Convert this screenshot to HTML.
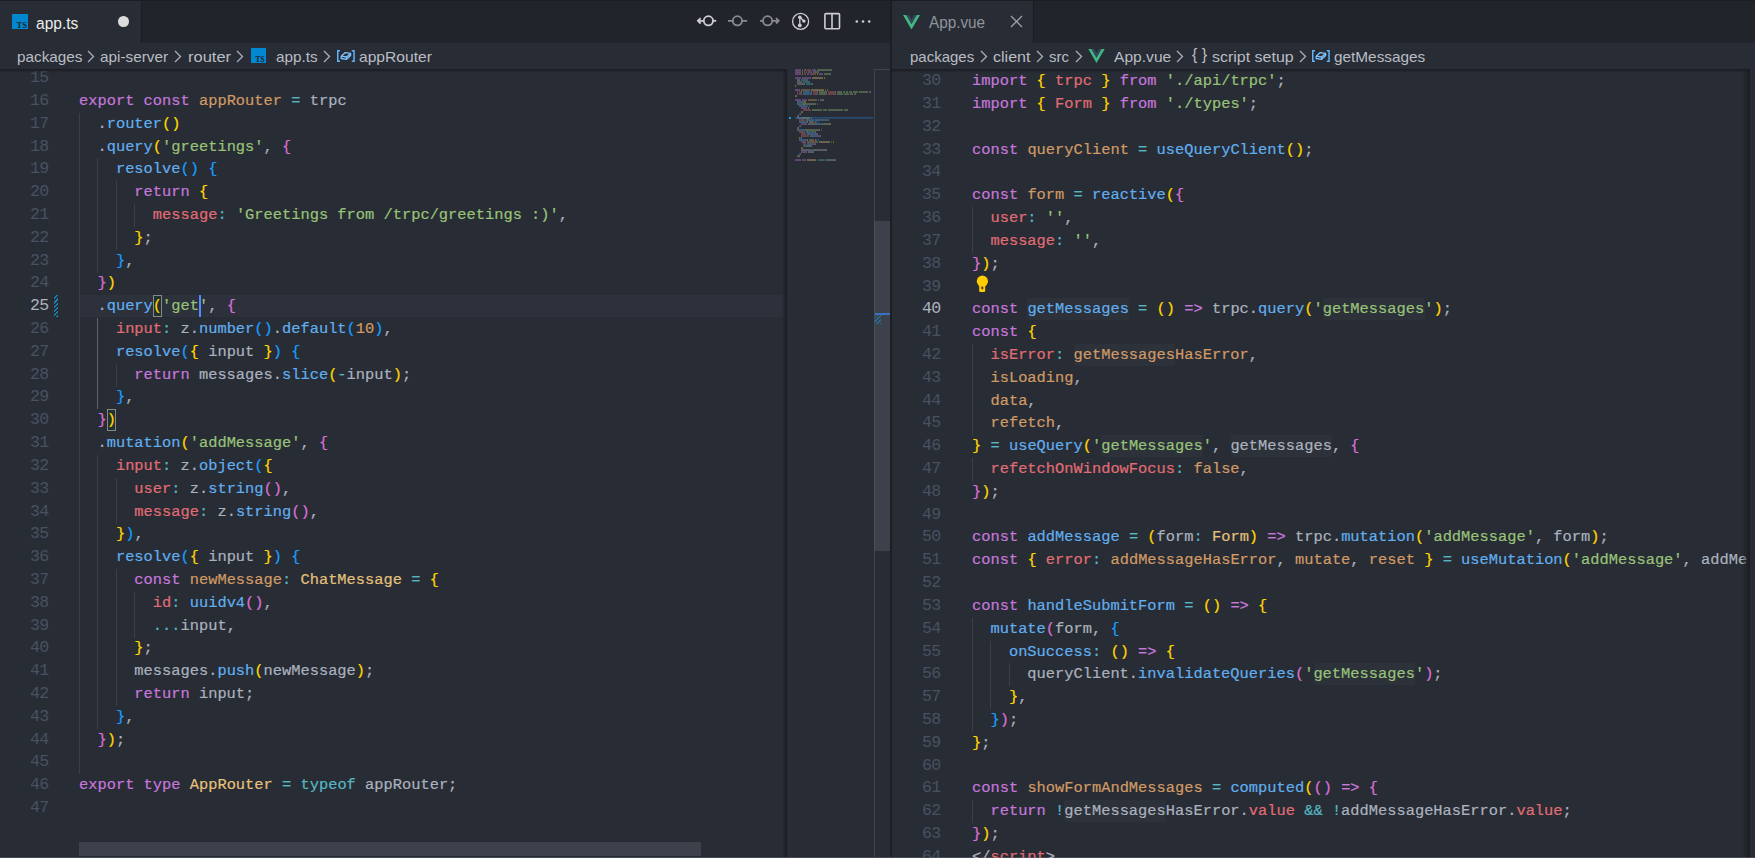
<!DOCTYPE html><html><head><meta charset="utf-8"><style>
*{margin:0;padding:0;box-sizing:border-box}
html,body{width:1755px;height:858px;overflow:hidden;background:#21252b;position:relative}
.a{position:absolute}
.code{font-family:"Liberation Mono",monospace;font-size:15.39px;line-height:22.8px;white-space:pre;color:#abb2bf;height:22.8px}
.code b{font-weight:normal}
.code{-webkit-text-stroke:0.2px currentColor}
.k{color:#c678dd}.f{color:#61afef}.s{color:#98c379}.v{color:#e06c75}.c{color:#d19a66}.t{color:#e5c07b}.o{color:#56b6c2}.y{color:#ffd700}.p{color:#da70d6}.b{color:#179fff}
.ln{font-family:"Liberation Mono",monospace;font-size:16.6px;letter-spacing:-0.77px;line-height:22.8px;color:#495162;text-align:right;width:40px;height:22.8px}
.ui{font-family:"Liberation Sans",sans-serif;white-space:pre}
.g{width:1px;background:#3b4048}
</style></head><body><div class="a" style="left:0;top:0;width:1755px;height:1px;background:#1b1d23"></div><div class="a" style="left:0;top:1px;width:141px;height:42px;background:#282c34"></div><div class="a" style="left:141px;top:1px;width:1px;height:42px;background:#1a1c20"></div><div class="a" style="left:0;top:43px;width:890px;height:814px;background:#282c34"></div><div class="a" style="left:890px;top:0;width:2px;height:858px;background:#1c1e23"></div><div class="a" style="left:892px;top:1px;width:141px;height:42px;background:#282c34"></div><div class="a" style="left:1033px;top:1px;width:1px;height:42px;background:#1a1c20"></div><div class="a" style="left:892px;top:43px;width:863px;height:814px;background:#282c34"></div><div class="a" style="left:0;top:857px;width:1755px;height:1px;background:#45494f"></div><div class="a" style="left:80px;top:295px;width:707px;height:22px;background:#2c313c"></div><div class="a" style="left:152.88px;top:295px;width:9.5px;height:22px;border:1px solid #888888;background:#22322e"></div><div class="a" style="left:106.70px;top:409px;width:9.5px;height:22px;border:1px solid #888888;background:#22322e"></div><div class="a g" style="left:79.00px;top:113.00px;height:23px"></div><div class="a g" style="left:79.00px;top:136.00px;height:23px"></div><div class="a g" style="left:79.00px;top:158.00px;height:23px"></div><div class="a g" style="left:97.47px;top:158.00px;height:23px"></div><div class="a g" style="left:79.00px;top:181.00px;height:23px"></div><div class="a g" style="left:97.47px;top:181.00px;height:23px"></div><div class="a g" style="left:115.94px;top:181.00px;height:23px"></div><div class="a g" style="left:79.00px;top:204.00px;height:23px"></div><div class="a g" style="left:97.47px;top:204.00px;height:23px"></div><div class="a g" style="left:115.94px;top:204.00px;height:23px"></div><div class="a g" style="left:134.41px;top:204.00px;height:23px"></div><div class="a g" style="left:79.00px;top:227.00px;height:23px"></div><div class="a g" style="left:97.47px;top:227.00px;height:23px"></div><div class="a g" style="left:115.94px;top:227.00px;height:23px"></div><div class="a g" style="left:79.00px;top:250.00px;height:23px"></div><div class="a g" style="left:97.47px;top:250.00px;height:23px"></div><div class="a g" style="left:79.00px;top:272.00px;height:23px"></div><div class="a g" style="left:79.00px;top:295.00px;height:23px"></div><div class="a g" style="left:79.00px;top:318.00px;height:23px"></div><div class="a g" style="left:97.47px;top:318.00px;height:23px ;background:#5f6269"></div><div class="a g" style="left:79.00px;top:341.00px;height:23px"></div><div class="a g" style="left:97.47px;top:341.00px;height:23px ;background:#5f6269"></div><div class="a g" style="left:79.00px;top:364.00px;height:23px"></div><div class="a g" style="left:97.47px;top:364.00px;height:23px ;background:#5f6269"></div><div class="a g" style="left:115.94px;top:364.00px;height:23px"></div><div class="a g" style="left:79.00px;top:386.00px;height:23px"></div><div class="a g" style="left:97.47px;top:386.00px;height:23px ;background:#5f6269"></div><div class="a g" style="left:79.00px;top:409.00px;height:23px"></div><div class="a g" style="left:79.00px;top:432.00px;height:23px"></div><div class="a g" style="left:79.00px;top:455.00px;height:23px"></div><div class="a g" style="left:97.47px;top:455.00px;height:23px"></div><div class="a g" style="left:79.00px;top:478.00px;height:23px"></div><div class="a g" style="left:97.47px;top:478.00px;height:23px"></div><div class="a g" style="left:115.94px;top:478.00px;height:23px"></div><div class="a g" style="left:79.00px;top:501.00px;height:23px"></div><div class="a g" style="left:97.47px;top:501.00px;height:23px"></div><div class="a g" style="left:115.94px;top:501.00px;height:23px"></div><div class="a g" style="left:79.00px;top:523.00px;height:23px"></div><div class="a g" style="left:97.47px;top:523.00px;height:23px"></div><div class="a g" style="left:79.00px;top:546.00px;height:23px"></div><div class="a g" style="left:97.47px;top:546.00px;height:23px"></div><div class="a g" style="left:79.00px;top:569.00px;height:23px"></div><div class="a g" style="left:97.47px;top:569.00px;height:23px"></div><div class="a g" style="left:115.94px;top:569.00px;height:23px"></div><div class="a g" style="left:79.00px;top:592.00px;height:23px"></div><div class="a g" style="left:97.47px;top:592.00px;height:23px"></div><div class="a g" style="left:115.94px;top:592.00px;height:23px"></div><div class="a g" style="left:134.41px;top:592.00px;height:23px"></div><div class="a g" style="left:79.00px;top:615.00px;height:23px"></div><div class="a g" style="left:97.47px;top:615.00px;height:23px"></div><div class="a g" style="left:115.94px;top:615.00px;height:23px"></div><div class="a g" style="left:134.41px;top:615.00px;height:23px"></div><div class="a g" style="left:79.00px;top:637.00px;height:23px"></div><div class="a g" style="left:97.47px;top:637.00px;height:23px"></div><div class="a g" style="left:115.94px;top:637.00px;height:23px"></div><div class="a g" style="left:79.00px;top:660.00px;height:23px"></div><div class="a g" style="left:97.47px;top:660.00px;height:23px"></div><div class="a g" style="left:115.94px;top:660.00px;height:23px"></div><div class="a g" style="left:79.00px;top:683.00px;height:23px"></div><div class="a g" style="left:97.47px;top:683.00px;height:23px"></div><div class="a g" style="left:115.94px;top:683.00px;height:23px"></div><div class="a g" style="left:79.00px;top:706.00px;height:23px"></div><div class="a g" style="left:97.47px;top:706.00px;height:23px"></div><div class="a g" style="left:79.00px;top:729.00px;height:23px"></div><div class="a g" style="left:79.00px;top:751.00px;height:23px"></div><div class="a ln" style="left:8.5px;top:67.00px;color:#495162">15</div><div class="a ln" style="left:8.5px;top:90.00px;color:#495162">16</div><div class="a code" style="left:79px;top:90.00px"><b class="k">export</b> <b class="k">const</b> <b class="c">appRouter</b> <b class="o">=</b> trpc</div><div class="a ln" style="left:8.5px;top:113.00px;color:#495162">17</div><div class="a code" style="left:79px;top:113.00px">  .<b class="f">router</b><b class="y">()</b></div><div class="a ln" style="left:8.5px;top:136.00px;color:#495162">18</div><div class="a code" style="left:79px;top:136.00px">  .<b class="f">query</b><b class="y">(</b><b class="s">&#x27;greetings&#x27;</b>, <b class="p">{</b></div><div class="a ln" style="left:8.5px;top:158.00px;color:#495162">19</div><div class="a code" style="left:79px;top:158.00px">    <b class="f">resolve</b><b class="b">()</b> <b class="b">{</b></div><div class="a ln" style="left:8.5px;top:181.00px;color:#495162">20</div><div class="a code" style="left:79px;top:181.00px">      <b class="k">return</b> <b class="y">{</b></div><div class="a ln" style="left:8.5px;top:204.00px;color:#495162">21</div><div class="a code" style="left:79px;top:204.00px">        <b class="v">message</b><b class="o">:</b> <b class="s">&#x27;Greetings from /trpc/greetings :)&#x27;</b>,</div><div class="a ln" style="left:8.5px;top:227.00px;color:#495162">22</div><div class="a code" style="left:79px;top:227.00px">      <b class="y">}</b>;</div><div class="a ln" style="left:8.5px;top:250.00px;color:#495162">23</div><div class="a code" style="left:79px;top:250.00px">    <b class="b">}</b>,</div><div class="a ln" style="left:8.5px;top:272.00px;color:#495162">24</div><div class="a code" style="left:79px;top:272.00px">  <b class="p">}</b><b class="y">)</b></div><div class="a ln" style="left:8.5px;top:295.00px;color:#abb2bf">25</div><div class="a code" style="left:79px;top:295.00px">  .<b class="f">query</b><b class="y">(</b><b class="s">&#x27;get&#x27;</b>, <b class="p">{</b></div><div class="a ln" style="left:8.5px;top:318.00px;color:#495162">26</div><div class="a code" style="left:79px;top:318.00px">    <b class="v">input</b><b class="o">:</b> z.<b class="f">number</b><b class="b">()</b>.<b class="f">default</b><b class="b">(</b><b class="c">10</b><b class="b">)</b>,</div><div class="a ln" style="left:8.5px;top:341.00px;color:#495162">27</div><div class="a code" style="left:79px;top:341.00px">    <b class="f">resolve</b><b class="b">(</b><b class="y">{</b> input <b class="y">}</b><b class="b">)</b> <b class="b">{</b></div><div class="a ln" style="left:8.5px;top:364.00px;color:#495162">28</div><div class="a code" style="left:79px;top:364.00px">      <b class="k">return</b> messages.<b class="f">slice</b><b class="y">(</b><b class="o">-</b>input<b class="y">)</b>;</div><div class="a ln" style="left:8.5px;top:386.00px;color:#495162">29</div><div class="a code" style="left:79px;top:386.00px">    <b class="b">}</b>,</div><div class="a ln" style="left:8.5px;top:409.00px;color:#495162">30</div><div class="a code" style="left:79px;top:409.00px">  <b class="p">}</b><b class="y">)</b></div><div class="a ln" style="left:8.5px;top:432.00px;color:#495162">31</div><div class="a code" style="left:79px;top:432.00px">  .<b class="f">mutation</b><b class="y">(</b><b class="s">&#x27;addMessage&#x27;</b>, <b class="p">{</b></div><div class="a ln" style="left:8.5px;top:455.00px;color:#495162">32</div><div class="a code" style="left:79px;top:455.00px">    <b class="v">input</b><b class="o">:</b> z.<b class="f">object</b><b class="b">(</b><b class="y">{</b></div><div class="a ln" style="left:8.5px;top:478.00px;color:#495162">33</div><div class="a code" style="left:79px;top:478.00px">      <b class="v">user</b><b class="o">:</b> z.<b class="f">string</b><b class="p">()</b>,</div><div class="a ln" style="left:8.5px;top:501.00px;color:#495162">34</div><div class="a code" style="left:79px;top:501.00px">      <b class="v">message</b><b class="o">:</b> z.<b class="f">string</b><b class="p">()</b>,</div><div class="a ln" style="left:8.5px;top:523.00px;color:#495162">35</div><div class="a code" style="left:79px;top:523.00px">    <b class="y">}</b><b class="b">)</b>,</div><div class="a ln" style="left:8.5px;top:546.00px;color:#495162">36</div><div class="a code" style="left:79px;top:546.00px">    <b class="f">resolve</b><b class="b">(</b><b class="y">{</b> input <b class="y">}</b><b class="b">)</b> <b class="b">{</b></div><div class="a ln" style="left:8.5px;top:569.00px;color:#495162">37</div><div class="a code" style="left:79px;top:569.00px">      <b class="k">const</b> <b class="c">newMessage</b><b class="o">:</b> <b class="t">ChatMessage</b> <b class="o">=</b> <b class="y">{</b></div><div class="a ln" style="left:8.5px;top:592.00px;color:#495162">38</div><div class="a code" style="left:79px;top:592.00px">        <b class="v">id</b><b class="o">:</b> <b class="f">uuidv4</b><b class="p">()</b>,</div><div class="a ln" style="left:8.5px;top:615.00px;color:#495162">39</div><div class="a code" style="left:79px;top:615.00px">        <b class="o">...</b>input,</div><div class="a ln" style="left:8.5px;top:637.00px;color:#495162">40</div><div class="a code" style="left:79px;top:637.00px">      <b class="y">}</b>;</div><div class="a ln" style="left:8.5px;top:660.00px;color:#495162">41</div><div class="a code" style="left:79px;top:660.00px">      messages.<b class="f">push</b><b class="y">(</b>newMessage<b class="y">)</b>;</div><div class="a ln" style="left:8.5px;top:683.00px;color:#495162">42</div><div class="a code" style="left:79px;top:683.00px">      <b class="k">return</b> input;</div><div class="a ln" style="left:8.5px;top:706.00px;color:#495162">43</div><div class="a code" style="left:79px;top:706.00px">    <b class="b">}</b>,</div><div class="a ln" style="left:8.5px;top:729.00px;color:#495162">44</div><div class="a code" style="left:79px;top:729.00px">  <b class="p">}</b><b class="y">)</b>;</div><div class="a ln" style="left:8.5px;top:751.00px;color:#495162">45</div><div class="a ln" style="left:8.5px;top:774.00px;color:#495162">46</div><div class="a code" style="left:79px;top:774.00px"><b class="k">export</b> <b class="k">type</b> <b class="t">AppRouter</b> <b class="o">=</b> <b class="o">typeof</b> appRouter;</div><div class="a ln" style="left:8.5px;top:797.00px;color:#495162">47</div><div class="a" style="left:199px;top:295px;width:2px;height:22px;background:#528bff"></div><div class="a" style="left:54px;top:295px;width:4px;height:22px;background:repeating-linear-gradient(-45deg,#1b7fad 0 1.5px,transparent 1.5px 3px)"></div><div class="a" style="left:0;top:69px;width:787px;height:4px;background:linear-gradient(#1a1c21,rgba(40,44,52,0))"></div><div class="a" style="left:782px;top:69px;width:5px;height:788px;background:linear-gradient(90deg,rgba(40,44,52,0),#1a1c21)"></div><div class="a" style="left:874px;top:69px;width:1px;height:788px;background:#404349"></div><div class="a" style="left:874px;top:69px;width:16px;height:1px;background:#404349"></div><div class="a" style="left:875px;top:221px;width:15px;height:330px;background:#3c414c"></div><div class="a" style="left:874px;top:221px;width:1px;height:330px;background:#4a4e57"></div><div class="a" style="left:875px;top:313px;width:15px;height:2px;background:#3a71c0"></div><div class="a" style="left:875px;top:315px;width:6px;height:9px;opacity:0.75;background:repeating-linear-gradient(-45deg,#1b7fad 0 1.2px,transparent 1.2px 2.6px)"></div><div class="a" style="left:79px;top:842px;width:622px;height:14px;background:#3c414c"></div><svg class="a" style="left:795px;top:0" width="80" height="170" viewBox="0 0 80 170"><g transform="translate(0,0)"><rect x="0" y="69.2" width="6" height="1.7" fill="#c678dd" fill-opacity="0.42"/><rect x="7" y="69.2" width="1" height="1.7" fill="#e06c75" fill-opacity="0.42"/><rect x="9" y="69.2" width="2" height="1.7" fill="#abb2bf" fill-opacity="0.42"/><rect x="12" y="69.2" width="4" height="1.7" fill="#e06c75" fill-opacity="0.42"/><rect x="17" y="69.2" width="4" height="1.7" fill="#c678dd" fill-opacity="0.42"/><rect x="22" y="69.2" width="14" height="1.7" fill="#98c379" fill-opacity="0.42"/><rect x="36" y="69.2" width="1" height="1.7" fill="#abb2bf" fill-opacity="0.42"/><rect x="0" y="71.2" width="6" height="1.7" fill="#c678dd" fill-opacity="0.42"/><rect x="7" y="71.2" width="1" height="1.7" fill="#ffd700" fill-opacity="0.42"/><rect x="9" y="71.2" width="1" height="1.7" fill="#e06c75" fill-opacity="0.42"/><rect x="11" y="71.2" width="1" height="1.7" fill="#ffd700" fill-opacity="0.42"/><rect x="13" y="71.2" width="4" height="1.7" fill="#c678dd" fill-opacity="0.42"/><rect x="18" y="71.2" width="5" height="1.7" fill="#98c379" fill-opacity="0.42"/><rect x="23" y="71.2" width="1" height="1.7" fill="#abb2bf" fill-opacity="0.42"/><rect x="0" y="73.2" width="6" height="1.7" fill="#c678dd" fill-opacity="0.42"/><rect x="7" y="73.2" width="1" height="1.7" fill="#ffd700" fill-opacity="0.42"/><rect x="9" y="73.2" width="2" height="1.7" fill="#e06c75" fill-opacity="0.42"/><rect x="12" y="73.2" width="2" height="1.7" fill="#c678dd" fill-opacity="0.42"/><rect x="15" y="73.2" width="6" height="1.7" fill="#e06c75" fill-opacity="0.42"/><rect x="22" y="73.2" width="1" height="1.7" fill="#ffd700" fill-opacity="0.42"/><rect x="24" y="73.2" width="4" height="1.7" fill="#c678dd" fill-opacity="0.42"/><rect x="29" y="73.2" width="6" height="1.7" fill="#98c379" fill-opacity="0.42"/><rect x="35" y="73.2" width="1" height="1.7" fill="#abb2bf" fill-opacity="0.42"/><rect x="0" y="77.2" width="6" height="1.7" fill="#c678dd" fill-opacity="0.42"/><rect x="7" y="77.2" width="9" height="1.7" fill="#c678dd" fill-opacity="0.42"/><rect x="17" y="77.2" width="11" height="1.7" fill="#e5c07b" fill-opacity="0.42"/><rect x="29" y="77.2" width="1" height="1.7" fill="#ffd700" fill-opacity="0.42"/><rect x="2" y="79.2" width="3" height="1.7" fill="#abb2bf" fill-opacity="0.42"/><rect x="6" y="79.2" width="6" height="1.7" fill="#56b6c2" fill-opacity="0.42"/><rect x="12" y="79.2" width="1" height="1.7" fill="#abb2bf" fill-opacity="0.42"/><rect x="2" y="81.2" width="5" height="1.7" fill="#abb2bf" fill-opacity="0.42"/><rect x="8" y="81.2" width="6" height="1.7" fill="#56b6c2" fill-opacity="0.42"/><rect x="14" y="81.2" width="1" height="1.7" fill="#abb2bf" fill-opacity="0.42"/><rect x="2" y="83.2" width="8" height="1.7" fill="#abb2bf" fill-opacity="0.42"/><rect x="11" y="83.2" width="6" height="1.7" fill="#56b6c2" fill-opacity="0.42"/><rect x="17" y="83.2" width="1" height="1.7" fill="#abb2bf" fill-opacity="0.42"/><rect x="0" y="85.2" width="1" height="1.7" fill="#ffd700" fill-opacity="0.42"/><rect x="0" y="89.2" width="5" height="1.7" fill="#c678dd" fill-opacity="0.42"/><rect x="6" y="89.2" width="8" height="1.7" fill="#d19a66" fill-opacity="0.42"/><rect x="14" y="89.2" width="1" height="1.7" fill="#abb2bf" fill-opacity="0.42"/><rect x="16" y="89.2" width="11" height="1.7" fill="#e5c07b" fill-opacity="0.42"/><rect x="27" y="89.2" width="2" height="1.7" fill="#ffd700" fill-opacity="0.42"/><rect x="30" y="89.2" width="1" height="1.7" fill="#56b6c2" fill-opacity="0.42"/><rect x="32" y="89.2" width="1" height="1.7" fill="#ffd700" fill-opacity="0.42"/><rect x="2" y="91.2" width="1" height="1.7" fill="#da70d6" fill-opacity="0.42"/><rect x="4" y="91.2" width="2" height="1.7" fill="#e06c75" fill-opacity="0.42"/><rect x="6" y="91.2" width="1" height="1.7" fill="#abb2bf" fill-opacity="0.42"/><rect x="8" y="91.2" width="6" height="1.7" fill="#61afef" fill-opacity="0.42"/><rect x="14" y="91.2" width="2" height="1.7" fill="#179fff" fill-opacity="0.42"/><rect x="16" y="91.2" width="1" height="1.7" fill="#abb2bf" fill-opacity="0.42"/><rect x="18" y="91.2" width="4" height="1.7" fill="#e06c75" fill-opacity="0.42"/><rect x="22" y="91.2" width="1" height="1.7" fill="#abb2bf" fill-opacity="0.42"/><rect x="24" y="91.2" width="7" height="1.7" fill="#98c379" fill-opacity="0.42"/><rect x="31" y="91.2" width="1" height="1.7" fill="#abb2bf" fill-opacity="0.42"/><rect x="33" y="91.2" width="7" height="1.7" fill="#e06c75" fill-opacity="0.42"/><rect x="40" y="91.2" width="1" height="1.7" fill="#abb2bf" fill-opacity="0.42"/><rect x="42" y="91.2" width="5" height="1.7" fill="#98c379" fill-opacity="0.42"/><rect x="48" y="91.2" width="2" height="1.7" fill="#98c379" fill-opacity="0.42"/><rect x="51" y="91.2" width="2" height="1.7" fill="#98c379" fill-opacity="0.42"/><rect x="54" y="91.2" width="3" height="1.7" fill="#98c379" fill-opacity="0.42"/><rect x="58" y="91.2" width="5" height="1.7" fill="#98c379" fill-opacity="0.42"/><rect x="64" y="91.2" width="9" height="1.7" fill="#98c379" fill-opacity="0.42"/><rect x="74" y="91.2" width="1" height="1.7" fill="#da70d6" fill-opacity="0.42"/><rect x="75" y="91.2" width="1" height="1.7" fill="#abb2bf" fill-opacity="0.42"/><rect x="2" y="93.2" width="1" height="1.7" fill="#da70d6" fill-opacity="0.42"/><rect x="4" y="93.2" width="2" height="1.7" fill="#e06c75" fill-opacity="0.42"/><rect x="6" y="93.2" width="1" height="1.7" fill="#abb2bf" fill-opacity="0.42"/><rect x="8" y="93.2" width="6" height="1.7" fill="#61afef" fill-opacity="0.42"/><rect x="14" y="93.2" width="2" height="1.7" fill="#179fff" fill-opacity="0.42"/><rect x="16" y="93.2" width="1" height="1.7" fill="#abb2bf" fill-opacity="0.42"/><rect x="18" y="93.2" width="4" height="1.7" fill="#e06c75" fill-opacity="0.42"/><rect x="22" y="93.2" width="1" height="1.7" fill="#abb2bf" fill-opacity="0.42"/><rect x="24" y="93.2" width="7" height="1.7" fill="#98c379" fill-opacity="0.42"/><rect x="31" y="93.2" width="1" height="1.7" fill="#abb2bf" fill-opacity="0.42"/><rect x="33" y="93.2" width="7" height="1.7" fill="#e06c75" fill-opacity="0.42"/><rect x="40" y="93.2" width="1" height="1.7" fill="#abb2bf" fill-opacity="0.42"/><rect x="42" y="93.2" width="6" height="1.7" fill="#98c379" fill-opacity="0.42"/><rect x="49" y="93.2" width="5" height="1.7" fill="#98c379" fill-opacity="0.42"/><rect x="55" y="93.2" width="3" height="1.7" fill="#98c379" fill-opacity="0.42"/><rect x="59" y="93.2" width="1" height="1.7" fill="#da70d6" fill-opacity="0.42"/><rect x="60" y="93.2" width="1" height="1.7" fill="#abb2bf" fill-opacity="0.42"/><rect x="0" y="95.2" width="1" height="1.7" fill="#ffd700" fill-opacity="0.42"/><rect x="1" y="95.2" width="1" height="1.7" fill="#abb2bf" fill-opacity="0.42"/><rect x="0" y="99.2" width="6" height="1.7" fill="#c678dd" fill-opacity="0.42"/><rect x="7" y="99.2" width="5" height="1.7" fill="#c678dd" fill-opacity="0.42"/><rect x="13" y="99.2" width="9" height="1.7" fill="#d19a66" fill-opacity="0.42"/><rect x="23" y="99.2" width="1" height="1.7" fill="#56b6c2" fill-opacity="0.42"/><rect x="25" y="99.2" width="4" height="1.7" fill="#abb2bf" fill-opacity="0.42"/><rect x="2" y="101.2" width="1" height="1.7" fill="#abb2bf" fill-opacity="0.42"/><rect x="3" y="101.2" width="6" height="1.7" fill="#61afef" fill-opacity="0.42"/><rect x="9" y="101.2" width="2" height="1.7" fill="#ffd700" fill-opacity="0.42"/><rect x="2" y="103.2" width="1" height="1.7" fill="#abb2bf" fill-opacity="0.42"/><rect x="3" y="103.2" width="5" height="1.7" fill="#61afef" fill-opacity="0.42"/><rect x="8" y="103.2" width="1" height="1.7" fill="#ffd700" fill-opacity="0.42"/><rect x="9" y="103.2" width="11" height="1.7" fill="#98c379" fill-opacity="0.42"/><rect x="20" y="103.2" width="1" height="1.7" fill="#abb2bf" fill-opacity="0.42"/><rect x="22" y="103.2" width="1" height="1.7" fill="#da70d6" fill-opacity="0.42"/><rect x="4" y="105.2" width="7" height="1.7" fill="#61afef" fill-opacity="0.42"/><rect x="11" y="105.2" width="2" height="1.7" fill="#179fff" fill-opacity="0.42"/><rect x="14" y="105.2" width="1" height="1.7" fill="#179fff" fill-opacity="0.42"/><rect x="6" y="107.2" width="6" height="1.7" fill="#c678dd" fill-opacity="0.42"/><rect x="13" y="107.2" width="1" height="1.7" fill="#ffd700" fill-opacity="0.42"/><rect x="8" y="109.2" width="7" height="1.7" fill="#e06c75" fill-opacity="0.42"/><rect x="15" y="109.2" width="1" height="1.7" fill="#56b6c2" fill-opacity="0.42"/><rect x="17" y="109.2" width="10" height="1.7" fill="#98c379" fill-opacity="0.42"/><rect x="28" y="109.2" width="4" height="1.7" fill="#98c379" fill-opacity="0.42"/><rect x="33" y="109.2" width="15" height="1.7" fill="#98c379" fill-opacity="0.42"/><rect x="49" y="109.2" width="3" height="1.7" fill="#98c379" fill-opacity="0.42"/><rect x="52" y="109.2" width="1" height="1.7" fill="#abb2bf" fill-opacity="0.42"/><rect x="6" y="111.2" width="1" height="1.7" fill="#ffd700" fill-opacity="0.42"/><rect x="7" y="111.2" width="1" height="1.7" fill="#abb2bf" fill-opacity="0.42"/><rect x="4" y="113.2" width="1" height="1.7" fill="#179fff" fill-opacity="0.42"/><rect x="5" y="113.2" width="1" height="1.7" fill="#abb2bf" fill-opacity="0.42"/><rect x="2" y="115.2" width="1" height="1.7" fill="#da70d6" fill-opacity="0.42"/><rect x="3" y="115.2" width="1" height="1.7" fill="#ffd700" fill-opacity="0.42"/><rect x="0" y="117.2" width="78" height="1.3" fill="#2a5585"/><rect x="2" y="117.2" width="1" height="1.7" fill="#abb2bf" fill-opacity="0.42"/><rect x="3" y="117.2" width="5" height="1.7" fill="#61afef" fill-opacity="0.42"/><rect x="8" y="117.2" width="1" height="1.7" fill="#ffd700" fill-opacity="0.42"/><rect x="9" y="117.2" width="5" height="1.7" fill="#98c379" fill-opacity="0.42"/><rect x="14" y="117.2" width="1" height="1.7" fill="#abb2bf" fill-opacity="0.42"/><rect x="16" y="117.2" width="1" height="1.7" fill="#da70d6" fill-opacity="0.42"/><rect x="4" y="119.2" width="5" height="1.7" fill="#e06c75" fill-opacity="0.42"/><rect x="9" y="119.2" width="1" height="1.7" fill="#56b6c2" fill-opacity="0.42"/><rect x="11" y="119.2" width="2" height="1.7" fill="#abb2bf" fill-opacity="0.42"/><rect x="13" y="119.2" width="6" height="1.7" fill="#61afef" fill-opacity="0.42"/><rect x="19" y="119.2" width="2" height="1.7" fill="#179fff" fill-opacity="0.42"/><rect x="21" y="119.2" width="1" height="1.7" fill="#abb2bf" fill-opacity="0.42"/><rect x="22" y="119.2" width="7" height="1.7" fill="#61afef" fill-opacity="0.42"/><rect x="29" y="119.2" width="1" height="1.7" fill="#179fff" fill-opacity="0.42"/><rect x="30" y="119.2" width="2" height="1.7" fill="#d19a66" fill-opacity="0.42"/><rect x="32" y="119.2" width="1" height="1.7" fill="#179fff" fill-opacity="0.42"/><rect x="33" y="119.2" width="1" height="1.7" fill="#abb2bf" fill-opacity="0.42"/><rect x="4" y="121.2" width="7" height="1.7" fill="#61afef" fill-opacity="0.42"/><rect x="11" y="121.2" width="1" height="1.7" fill="#179fff" fill-opacity="0.42"/><rect x="12" y="121.2" width="1" height="1.7" fill="#ffd700" fill-opacity="0.42"/><rect x="14" y="121.2" width="5" height="1.7" fill="#abb2bf" fill-opacity="0.42"/><rect x="20" y="121.2" width="1" height="1.7" fill="#ffd700" fill-opacity="0.42"/><rect x="21" y="121.2" width="1" height="1.7" fill="#179fff" fill-opacity="0.42"/><rect x="23" y="121.2" width="1" height="1.7" fill="#179fff" fill-opacity="0.42"/><rect x="6" y="123.2" width="6" height="1.7" fill="#c678dd" fill-opacity="0.42"/><rect x="13" y="123.2" width="9" height="1.7" fill="#abb2bf" fill-opacity="0.42"/><rect x="22" y="123.2" width="5" height="1.7" fill="#61afef" fill-opacity="0.42"/><rect x="27" y="123.2" width="1" height="1.7" fill="#ffd700" fill-opacity="0.42"/><rect x="28" y="123.2" width="1" height="1.7" fill="#56b6c2" fill-opacity="0.42"/><rect x="29" y="123.2" width="5" height="1.7" fill="#abb2bf" fill-opacity="0.42"/><rect x="34" y="123.2" width="1" height="1.7" fill="#ffd700" fill-opacity="0.42"/><rect x="35" y="123.2" width="1" height="1.7" fill="#abb2bf" fill-opacity="0.42"/><rect x="4" y="125.2" width="1" height="1.7" fill="#179fff" fill-opacity="0.42"/><rect x="5" y="125.2" width="1" height="1.7" fill="#abb2bf" fill-opacity="0.42"/><rect x="2" y="127.2" width="1" height="1.7" fill="#da70d6" fill-opacity="0.42"/><rect x="3" y="127.2" width="1" height="1.7" fill="#ffd700" fill-opacity="0.42"/><rect x="2" y="129.2" width="1" height="1.7" fill="#abb2bf" fill-opacity="0.42"/><rect x="3" y="129.2" width="8" height="1.7" fill="#61afef" fill-opacity="0.42"/><rect x="11" y="129.2" width="1" height="1.7" fill="#ffd700" fill-opacity="0.42"/><rect x="12" y="129.2" width="12" height="1.7" fill="#98c379" fill-opacity="0.42"/><rect x="24" y="129.2" width="1" height="1.7" fill="#abb2bf" fill-opacity="0.42"/><rect x="26" y="129.2" width="1" height="1.7" fill="#da70d6" fill-opacity="0.42"/><rect x="4" y="131.2" width="5" height="1.7" fill="#e06c75" fill-opacity="0.42"/><rect x="9" y="131.2" width="1" height="1.7" fill="#56b6c2" fill-opacity="0.42"/><rect x="11" y="131.2" width="2" height="1.7" fill="#abb2bf" fill-opacity="0.42"/><rect x="13" y="131.2" width="6" height="1.7" fill="#61afef" fill-opacity="0.42"/><rect x="19" y="131.2" width="1" height="1.7" fill="#179fff" fill-opacity="0.42"/><rect x="20" y="131.2" width="1" height="1.7" fill="#ffd700" fill-opacity="0.42"/><rect x="6" y="133.2" width="4" height="1.7" fill="#e06c75" fill-opacity="0.42"/><rect x="10" y="133.2" width="1" height="1.7" fill="#56b6c2" fill-opacity="0.42"/><rect x="12" y="133.2" width="2" height="1.7" fill="#abb2bf" fill-opacity="0.42"/><rect x="14" y="133.2" width="6" height="1.7" fill="#61afef" fill-opacity="0.42"/><rect x="20" y="133.2" width="2" height="1.7" fill="#da70d6" fill-opacity="0.42"/><rect x="22" y="133.2" width="1" height="1.7" fill="#abb2bf" fill-opacity="0.42"/><rect x="6" y="135.2" width="7" height="1.7" fill="#e06c75" fill-opacity="0.42"/><rect x="13" y="135.2" width="1" height="1.7" fill="#56b6c2" fill-opacity="0.42"/><rect x="15" y="135.2" width="2" height="1.7" fill="#abb2bf" fill-opacity="0.42"/><rect x="17" y="135.2" width="6" height="1.7" fill="#61afef" fill-opacity="0.42"/><rect x="23" y="135.2" width="2" height="1.7" fill="#da70d6" fill-opacity="0.42"/><rect x="25" y="135.2" width="1" height="1.7" fill="#abb2bf" fill-opacity="0.42"/><rect x="4" y="137.2" width="1" height="1.7" fill="#ffd700" fill-opacity="0.42"/><rect x="5" y="137.2" width="1" height="1.7" fill="#179fff" fill-opacity="0.42"/><rect x="6" y="137.2" width="1" height="1.7" fill="#abb2bf" fill-opacity="0.42"/><rect x="4" y="139.2" width="7" height="1.7" fill="#61afef" fill-opacity="0.42"/><rect x="11" y="139.2" width="1" height="1.7" fill="#179fff" fill-opacity="0.42"/><rect x="12" y="139.2" width="1" height="1.7" fill="#ffd700" fill-opacity="0.42"/><rect x="14" y="139.2" width="5" height="1.7" fill="#abb2bf" fill-opacity="0.42"/><rect x="20" y="139.2" width="1" height="1.7" fill="#ffd700" fill-opacity="0.42"/><rect x="21" y="139.2" width="1" height="1.7" fill="#179fff" fill-opacity="0.42"/><rect x="23" y="139.2" width="1" height="1.7" fill="#179fff" fill-opacity="0.42"/><rect x="6" y="141.2" width="5" height="1.7" fill="#c678dd" fill-opacity="0.42"/><rect x="12" y="141.2" width="10" height="1.7" fill="#d19a66" fill-opacity="0.42"/><rect x="22" y="141.2" width="1" height="1.7" fill="#56b6c2" fill-opacity="0.42"/><rect x="24" y="141.2" width="11" height="1.7" fill="#e5c07b" fill-opacity="0.42"/><rect x="36" y="141.2" width="1" height="1.7" fill="#56b6c2" fill-opacity="0.42"/><rect x="38" y="141.2" width="1" height="1.7" fill="#ffd700" fill-opacity="0.42"/><rect x="8" y="143.2" width="2" height="1.7" fill="#e06c75" fill-opacity="0.42"/><rect x="10" y="143.2" width="1" height="1.7" fill="#56b6c2" fill-opacity="0.42"/><rect x="12" y="143.2" width="6" height="1.7" fill="#61afef" fill-opacity="0.42"/><rect x="18" y="143.2" width="2" height="1.7" fill="#da70d6" fill-opacity="0.42"/><rect x="20" y="143.2" width="1" height="1.7" fill="#abb2bf" fill-opacity="0.42"/><rect x="8" y="145.2" width="3" height="1.7" fill="#56b6c2" fill-opacity="0.42"/><rect x="11" y="145.2" width="6" height="1.7" fill="#abb2bf" fill-opacity="0.42"/><rect x="6" y="147.2" width="1" height="1.7" fill="#ffd700" fill-opacity="0.42"/><rect x="7" y="147.2" width="1" height="1.7" fill="#abb2bf" fill-opacity="0.42"/><rect x="6" y="149.2" width="9" height="1.7" fill="#abb2bf" fill-opacity="0.42"/><rect x="15" y="149.2" width="4" height="1.7" fill="#61afef" fill-opacity="0.42"/><rect x="19" y="149.2" width="1" height="1.7" fill="#ffd700" fill-opacity="0.42"/><rect x="20" y="149.2" width="10" height="1.7" fill="#abb2bf" fill-opacity="0.42"/><rect x="30" y="149.2" width="1" height="1.7" fill="#ffd700" fill-opacity="0.42"/><rect x="31" y="149.2" width="1" height="1.7" fill="#abb2bf" fill-opacity="0.42"/><rect x="6" y="151.2" width="6" height="1.7" fill="#c678dd" fill-opacity="0.42"/><rect x="13" y="151.2" width="6" height="1.7" fill="#abb2bf" fill-opacity="0.42"/><rect x="4" y="153.2" width="1" height="1.7" fill="#179fff" fill-opacity="0.42"/><rect x="5" y="153.2" width="1" height="1.7" fill="#abb2bf" fill-opacity="0.42"/><rect x="2" y="155.2" width="1" height="1.7" fill="#da70d6" fill-opacity="0.42"/><rect x="3" y="155.2" width="1" height="1.7" fill="#ffd700" fill-opacity="0.42"/><rect x="4" y="155.2" width="1" height="1.7" fill="#abb2bf" fill-opacity="0.42"/><rect x="0" y="159.2" width="6" height="1.7" fill="#c678dd" fill-opacity="0.42"/><rect x="7" y="159.2" width="4" height="1.7" fill="#c678dd" fill-opacity="0.42"/><rect x="12" y="159.2" width="9" height="1.7" fill="#e5c07b" fill-opacity="0.42"/><rect x="22" y="159.2" width="1" height="1.7" fill="#56b6c2" fill-opacity="0.42"/><rect x="24" y="159.2" width="6" height="1.7" fill="#56b6c2" fill-opacity="0.42"/><rect x="31" y="159.2" width="10" height="1.7" fill="#abb2bf" fill-opacity="0.42"/></g></svg><div class="a" style="left:788.7px;top:116.5px;width:2.5px;height:2.5px;background:#1d9bd6"></div><div class="a" style="left:1027.41px;top:297.50px;width:101.58px;height:22.8px;background:#2d3139;border-radius:2px"></div><div class="a" style="left:1322.93px;top:297.50px;width:101.58px;height:22.8px;background:#2d3139;border-radius:2px"></div><div class="a" style="left:1073.59px;top:343.50px;width:101.58px;height:22.8px;background:#2d3139;border-radius:2px"></div><div class="a" style="left:1101.29px;top:434.50px;width:101.58px;height:22.8px;background:#2d3139;border-radius:2px"></div><div class="a" style="left:1230.58px;top:434.50px;width:101.58px;height:22.8px;background:#2d3139;border-radius:2px"></div><div class="a" style="left:1313.69px;top:662.50px;width:101.58px;height:22.8px;background:#2d3139;border-radius:2px"></div><div class="a" style="left:1064.35px;top:799.50px;width:101.58px;height:22.8px;background:#2d3139;border-radius:2px"></div><div class="a g" style="left:972.00px;top:207.00px;height:23px"></div><div class="a g" style="left:972.00px;top:230.00px;height:23px"></div><div class="a g" style="left:972.00px;top:344.00px;height:23px"></div><div class="a g" style="left:972.00px;top:367.00px;height:23px"></div><div class="a g" style="left:972.00px;top:390.00px;height:23px"></div><div class="a g" style="left:972.00px;top:412.00px;height:23px"></div><div class="a g" style="left:972.00px;top:458.00px;height:23px"></div><div class="a g" style="left:972.00px;top:618.00px;height:23px"></div><div class="a g" style="left:972.00px;top:641.00px;height:23px"></div><div class="a g" style="left:990.47px;top:641.00px;height:23px"></div><div class="a g" style="left:972.00px;top:663.00px;height:23px"></div><div class="a g" style="left:990.47px;top:663.00px;height:23px"></div><div class="a g" style="left:1008.94px;top:663.00px;height:23px"></div><div class="a g" style="left:972.00px;top:686.00px;height:23px"></div><div class="a g" style="left:990.47px;top:686.00px;height:23px"></div><div class="a g" style="left:972.00px;top:709.00px;height:23px"></div><div class="a g" style="left:972.00px;top:800.00px;height:23px"></div><div class="a" style="left:892px;top:69px;width:856px;height:789px;overflow:hidden"><div class="a ln" style="left:8.40px;top:1.00px;color:#495162">30</div><div class="a code" style="left:80px;top:1.00px"><b class="k">import</b> <b class="y">{</b> <b class="v">trpc</b> <b class="y">}</b> <b class="k">from</b> <b class="s">&#x27;./api/trpc&#x27;</b>;</div><div class="a ln" style="left:8.40px;top:24.00px;color:#495162">31</div><div class="a code" style="left:80px;top:24.00px"><b class="k">import</b> <b class="y">{</b> <b class="v">Form</b> <b class="y">}</b> <b class="k">from</b> <b class="s">&#x27;./types&#x27;</b>;</div><div class="a ln" style="left:8.40px;top:47.00px;color:#495162">32</div><div class="a ln" style="left:8.40px;top:70.00px;color:#495162">33</div><div class="a code" style="left:80px;top:70.00px"><b class="k">const</b> <b class="c">queryClient</b> <b class="o">=</b> <b class="f">useQueryClient</b><b class="y">()</b>;</div><div class="a ln" style="left:8.40px;top:92.00px;color:#495162">34</div><div class="a ln" style="left:8.40px;top:115.00px;color:#495162">35</div><div class="a code" style="left:80px;top:115.00px"><b class="k">const</b> <b class="c">form</b> <b class="o">=</b> <b class="f">reactive</b><b class="y">(</b><b class="p">{</b></div><div class="a ln" style="left:8.40px;top:138.00px;color:#495162">36</div><div class="a code" style="left:80px;top:138.00px">  <b class="v">user</b><b class="o">:</b> <b class="s">&#x27;&#x27;</b>,</div><div class="a ln" style="left:8.40px;top:161.00px;color:#495162">37</div><div class="a code" style="left:80px;top:161.00px">  <b class="v">message</b><b class="o">:</b> <b class="s">&#x27;&#x27;</b>,</div><div class="a ln" style="left:8.40px;top:184.00px;color:#495162">38</div><div class="a code" style="left:80px;top:184.00px"><b class="p">}</b><b class="y">)</b>;</div><div class="a ln" style="left:8.40px;top:207.00px;color:#495162">39</div><div class="a ln" style="left:8.40px;top:229.00px;color:#abb2bf">40</div><div class="a code" style="left:80px;top:229.00px"><b class="k">const</b> <b class="f">getMessages</b> <b class="o">=</b> <b class="y">()</b> <b class="k">=&gt;</b> trpc.<b class="f">query</b><b class="y">(</b><b class="s">&#x27;getMessages&#x27;</b><b class="y">)</b>;</div><div class="a ln" style="left:8.40px;top:252.00px;color:#495162">41</div><div class="a code" style="left:80px;top:252.00px"><b class="k">const</b> <b class="y">{</b></div><div class="a ln" style="left:8.40px;top:275.00px;color:#495162">42</div><div class="a code" style="left:80px;top:275.00px">  <b class="v">isError</b><b class="o">:</b> <b class="c">getMessagesHasError</b>,</div><div class="a ln" style="left:8.40px;top:298.00px;color:#495162">43</div><div class="a code" style="left:80px;top:298.00px">  <b class="c">isLoading</b>,</div><div class="a ln" style="left:8.40px;top:321.00px;color:#495162">44</div><div class="a code" style="left:80px;top:321.00px">  <b class="c">data</b>,</div><div class="a ln" style="left:8.40px;top:343.00px;color:#495162">45</div><div class="a code" style="left:80px;top:343.00px">  <b class="c">refetch</b>,</div><div class="a ln" style="left:8.40px;top:366.00px;color:#495162">46</div><div class="a code" style="left:80px;top:366.00px"><b class="y">}</b> <b class="o">=</b> <b class="f">useQuery</b><b class="y">(</b><b class="s">&#x27;getMessages&#x27;</b>, getMessages, <b class="p">{</b></div><div class="a ln" style="left:8.40px;top:389.00px;color:#495162">47</div><div class="a code" style="left:80px;top:389.00px">  <b class="v">refetchOnWindowFocus</b><b class="o">:</b> <b class="c">false</b>,</div><div class="a ln" style="left:8.40px;top:412.00px;color:#495162">48</div><div class="a code" style="left:80px;top:412.00px"><b class="p">}</b><b class="y">)</b>;</div><div class="a ln" style="left:8.40px;top:435.00px;color:#495162">49</div><div class="a ln" style="left:8.40px;top:457.00px;color:#495162">50</div><div class="a code" style="left:80px;top:457.00px"><b class="k">const</b> <b class="f">addMessage</b> <b class="o">=</b> <b class="y">(</b>form<b class="o">:</b> <b class="t">Form</b><b class="y">)</b> <b class="k">=&gt;</b> trpc.<b class="f">mutation</b><b class="y">(</b><b class="s">&#x27;addMessage&#x27;</b>, form<b class="y">)</b>;</div><div class="a ln" style="left:8.40px;top:480.00px;color:#495162">51</div><div class="a code" style="left:80px;top:480.00px"><b class="k">const</b> <b class="y">{</b> <b class="v">error</b><b class="o">:</b> <b class="c">addMessageHasError</b>, <b class="c">mutate</b>, <b class="c">reset</b> <b class="y">}</b> <b class="o">=</b> <b class="f">useMutation</b><b class="y">(</b><b class="s">&#x27;addMessage&#x27;</b>, addMessage<b class="y">)</b>;</div><div class="a ln" style="left:8.40px;top:503.00px;color:#495162">52</div><div class="a ln" style="left:8.40px;top:526.00px;color:#495162">53</div><div class="a code" style="left:80px;top:526.00px"><b class="k">const</b> <b class="f">handleSubmitForm</b> <b class="o">=</b> <b class="y">()</b> <b class="k">=&gt;</b> <b class="y">{</b></div><div class="a ln" style="left:8.40px;top:549.00px;color:#495162">54</div><div class="a code" style="left:80px;top:549.00px">  <b class="f">mutate</b><b class="p">(</b>form, <b class="b">{</b></div><div class="a ln" style="left:8.40px;top:572.00px;color:#495162">55</div><div class="a code" style="left:80px;top:572.00px">    <b class="f">onSuccess</b><b class="o">:</b> <b class="y">()</b> <b class="k">=&gt;</b> <b class="y">{</b></div><div class="a ln" style="left:8.40px;top:594.00px;color:#495162">56</div><div class="a code" style="left:80px;top:594.00px">      queryClient.<b class="f">invalidateQueries</b><b class="p">(</b><b class="s">&#x27;getMessages&#x27;</b><b class="p">)</b>;</div><div class="a ln" style="left:8.40px;top:617.00px;color:#495162">57</div><div class="a code" style="left:80px;top:617.00px">    <b class="y">}</b>,</div><div class="a ln" style="left:8.40px;top:640.00px;color:#495162">58</div><div class="a code" style="left:80px;top:640.00px">  <b class="b">}</b><b class="p">)</b>;</div><div class="a ln" style="left:8.40px;top:663.00px;color:#495162">59</div><div class="a code" style="left:80px;top:663.00px"><b class="y">}</b>;</div><div class="a ln" style="left:8.40px;top:686.00px;color:#495162">60</div><div class="a ln" style="left:8.40px;top:708.00px;color:#495162">61</div><div class="a code" style="left:80px;top:708.00px"><b class="k">const</b> <b class="c">showFormAndMessages</b> <b class="o">=</b> <b class="f">computed</b><b class="y">(</b><b class="p">()</b> <b class="k">=&gt;</b> <b class="p">{</b></div><div class="a ln" style="left:8.40px;top:731.00px;color:#495162">62</div><div class="a code" style="left:80px;top:731.00px">  <b class="k">return</b> <b class="o">!</b>getMessagesHasError.<b class="v">value</b> <b class="o">&amp;&amp;</b> <b class="o">!</b>addMessageHasError.<b class="v">value</b>;</div><div class="a ln" style="left:8.40px;top:754.00px;color:#495162">63</div><div class="a code" style="left:80px;top:754.00px"><b class="p">}</b><b class="y">)</b>;</div><div class="a ln" style="left:8.40px;top:777.00px;color:#495162">64</div><div class="a code" style="left:80px;top:777.00px">&lt;/<b class="v">script</b>&gt;</div></div><div class="a" style="left:892px;top:69px;width:858px;height:4px;background:linear-gradient(#1a1c21,rgba(40,44,52,0))"></div><div class="a" style="left:1742px;top:69px;width:8px;height:788px;background:linear-gradient(90deg,rgba(40,44,52,0),#1b1d22)"></div><svg class="a" style="left:975px;top:274px" width="15" height="19" viewBox="0 0 15 19"><circle cx="7.4" cy="7.2" r="5.6" fill="#ffcc00"/><rect x="4.2" y="10" width="6" height="7.9" rx="1" fill="#ffcc00"/><rect x="6.4" y="12.6" width="1.8" height="2.6" fill="#282c34"/></svg><svg class="a" style="left:11.6px;top:13.5px" width="16.7" height="15.8" viewBox="0 0 16 16" preserveAspectRatio="none"><rect x="0" y="0" width="16" height="16" fill="#0288d1"/><text x="4.3" y="14.4" font-family="Liberation Serif" font-weight="bold" font-size="9.4" fill="#1d232b" textLength="10" lengthAdjust="spacingAndGlyphs">TS</text></svg><div class="a ui" style="left:36px;top:13.8px;font-size:16.25px;color:#ececec;transform-origin:0 0;transform:scaleX(0.955)">app.ts</div><div class="a" style="left:118.2px;top:16px;width:10.6px;height:10.6px;border-radius:50%;background:#dcdcdc"></div><svg class="a" style="left:903px;top:14.5px" width="17" height="14.5" viewBox="0 0 17 14.5"><path d="M0 0 L3.3 0 L8.5 9 L13.7 0 L17 0 L8.5 14.5 Z" fill="#41b883"/><path d="M3.3 0 L6 0 L8.5 4.4 L11 0 L13.7 0 L8.5 9 Z" fill="#35495e"/></svg><div class="a ui" style="left:929px;top:13.3px;font-size:16.25px;color:#8f949c;transform-origin:0 0;transform:scaleX(0.94)">App.vue</div><svg class="a" style="left:1010px;top:15px" width="13" height="13" viewBox="0 0 13 13"><path d="M1 1 L12 12 M12 1 L1 12" stroke="#9a9ea5" stroke-width="1.3"/></svg><svg class="a" style="left:694px;top:11px" width="180" height="22" viewBox="0 0 180 22"><g fill="none" stroke="#cdced1" stroke-width="1.8"><circle cx="14.4" cy="9.8" r="4.6"/><path d="M19 9.8 H22.2"/><path d="M9.8 9.8 H4 M6.6 7.1 L3.9 9.8 L6.6 12.5"/></g><g fill="none" stroke="#898b8f" stroke-width="1.8"><circle cx="43.4" cy="9.8" r="4.6"/><path d="M33.9 9.8 H38.8 M48 9.8 H53.1"/></g><g fill="none" stroke="#898b8f" stroke-width="1.8"><circle cx="73.6" cy="9.8" r="4.6"/><path d="M66 9.8 H69 M78.2 9.8 H84.6 M82 7.1 L84.7 9.8 L82 12.5"/></g><g fill="none" stroke="#cdced1" stroke-width="1.3"><circle cx="106.6" cy="10.4" r="8.0"/><path d="M105.8 6.3 V14.4 M105.8 6.3 L109.9 10.1"/></g><g fill="#cdced1"><circle cx="105.8" cy="6.3" r="1.8"/><circle cx="105.8" cy="14.4" r="1.9"/><circle cx="109.9" cy="10.1" r="1.7"/></g><g fill="none" stroke="#cdced1" stroke-width="1.6"><rect x="130.9" y="2.6" width="14.6" height="15.2" rx="1"/><path d="M138 2.6 V17.8"/></g><g fill="#cdced1"><circle cx="162.8" cy="10.5" r="1.3"/><circle cx="169" cy="10.5" r="1.3"/><circle cx="175.2" cy="10.5" r="1.3"/></g></svg><div class="a ui" style="left:17px;top:47.8px;font-size:15px;color:#b9bdc4;transform-origin:0 0;transform:scaleX(1.02)">packages</div><svg class="a" style="left:87px;top:50px" width="8" height="13" viewBox="0 0 8 13"><path d="M1 1 L6.5 6.5 L1 12" fill="none" stroke="#a9afba" stroke-width="1.3"/></svg><div class="a ui" style="left:100px;top:47.8px;font-size:15px;color:#b9bdc4;transform-origin:0 0;transform:scaleX(1.02)">api-server</div><svg class="a" style="left:174px;top:50px" width="8" height="13" viewBox="0 0 8 13"><path d="M1 1 L6.5 6.5 L1 12" fill="none" stroke="#a9afba" stroke-width="1.3"/></svg><div class="a ui" style="left:188px;top:47.8px;font-size:15px;color:#b9bdc4;transform-origin:0 0;transform:scaleX(1.1)">router</div><svg class="a" style="left:236px;top:50px" width="8" height="13" viewBox="0 0 8 13"><path d="M1 1 L6.5 6.5 L1 12" fill="none" stroke="#a9afba" stroke-width="1.3"/></svg><svg class="a" style="left:250.8px;top:47.8px" width="15.4" height="15.4" viewBox="0 0 16 16" preserveAspectRatio="none"><rect x="0" y="0" width="16" height="16" fill="#0288d1"/><text x="4.3" y="14.4" font-family="Liberation Serif" font-weight="bold" font-size="9.4" fill="#1d232b" textLength="10" lengthAdjust="spacingAndGlyphs">TS</text></svg><div class="a ui" style="left:276px;top:47.8px;font-size:15px;color:#b9bdc4;transform-origin:0 0;transform:scaleX(1.02)">app.ts</div><svg class="a" style="left:323px;top:50px" width="8" height="13" viewBox="0 0 8 13"><path d="M1 1 L6.5 6.5 L1 12" fill="none" stroke="#a9afba" stroke-width="1.3"/></svg><svg class="a" style="left:337px;top:50px" width="18" height="12" viewBox="0 0 18 12"><g fill="none" stroke="#62b2f7" stroke-width="1.5"><path d="M3 0.75 H0.75 V11.25 H3 M14.8 0.75 H17.05 V11.25 H14.8"/></g><g fill="none" stroke="#7cc3ff" stroke-width="1.3" stroke-linejoin="round"><path d="M4.2 6.2 L8.2 2.6 L13.6 3.4 L13.6 5.6 L9.6 9.3 L4.2 8.5 Z M4.2 6.2 L9.6 7 L13.6 3.4 M9.6 7 V9.3"/></g></svg><div class="a ui" style="left:359px;top:47.8px;font-size:15px;color:#b9bdc4;transform-origin:0 0;transform:scaleX(1.04)">appRouter</div><div class="a ui" style="left:910px;top:47.8px;font-size:15px;color:#b9bdc4;transform-origin:0 0;transform:scaleX(1.0)">packages</div><svg class="a" style="left:980px;top:50px" width="8" height="13" viewBox="0 0 8 13"><path d="M1 1 L6.5 6.5 L1 12" fill="none" stroke="#a9afba" stroke-width="1.3"/></svg><div class="a ui" style="left:993px;top:47.8px;font-size:15px;color:#b9bdc4;transform-origin:0 0;transform:scaleX(1.07)">client</div><svg class="a" style="left:1036px;top:50px" width="8" height="13" viewBox="0 0 8 13"><path d="M1 1 L6.5 6.5 L1 12" fill="none" stroke="#a9afba" stroke-width="1.3"/></svg><div class="a ui" style="left:1049px;top:47.8px;font-size:15px;color:#b9bdc4;transform-origin:0 0;transform:scaleX(1.0)">src</div><svg class="a" style="left:1075px;top:50px" width="8" height="13" viewBox="0 0 8 13"><path d="M1 1 L6.5 6.5 L1 12" fill="none" stroke="#a9afba" stroke-width="1.3"/></svg><svg class="a" style="left:1088px;top:48.5px" width="17" height="14" viewBox="0 0 17 14.5"><path d="M0 0 L3.3 0 L8.5 9 L13.7 0 L17 0 L8.5 14.5 Z" fill="#41b883"/><path d="M3.3 0 L6 0 L8.5 4.4 L11 0 L13.7 0 L8.5 9 Z" fill="#35495e"/></svg><div class="a ui" style="left:1114px;top:47.8px;font-size:15px;color:#b9bdc4;transform-origin:0 0;transform:scaleX(1.04)">App.vue</div><svg class="a" style="left:1176px;top:50px" width="8" height="13" viewBox="0 0 8 13"><path d="M1 1 L6.5 6.5 L1 12" fill="none" stroke="#a9afba" stroke-width="1.3"/></svg><div class="a ui" style="left:1192px;top:46px;font-size:16px;color:#b9bdc4">{ }</div><div class="a ui" style="left:1212px;top:47.8px;font-size:15px;color:#b9bdc4;transform-origin:0 0;transform:scaleX(1.065)">script setup</div><svg class="a" style="left:1299px;top:50px" width="8" height="13" viewBox="0 0 8 13"><path d="M1 1 L6.5 6.5 L1 12" fill="none" stroke="#a9afba" stroke-width="1.3"/></svg><svg class="a" style="left:1312px;top:50px" width="18" height="12" viewBox="0 0 18 12"><g fill="none" stroke="#62b2f7" stroke-width="1.5"><path d="M3 0.75 H0.75 V11.25 H3 M14.8 0.75 H17.05 V11.25 H14.8"/></g><g fill="none" stroke="#7cc3ff" stroke-width="1.3" stroke-linejoin="round"><path d="M4.2 6.2 L8.2 2.6 L13.6 3.4 L13.6 5.6 L9.6 9.3 L4.2 8.5 Z M4.2 6.2 L9.6 7 L13.6 3.4 M9.6 7 V9.3"/></g></svg><div class="a ui" style="left:1334px;top:47.8px;font-size:15px;color:#b9bdc4;transform-origin:0 0;transform:scaleX(1.023)">getMessages</div></body></html>
